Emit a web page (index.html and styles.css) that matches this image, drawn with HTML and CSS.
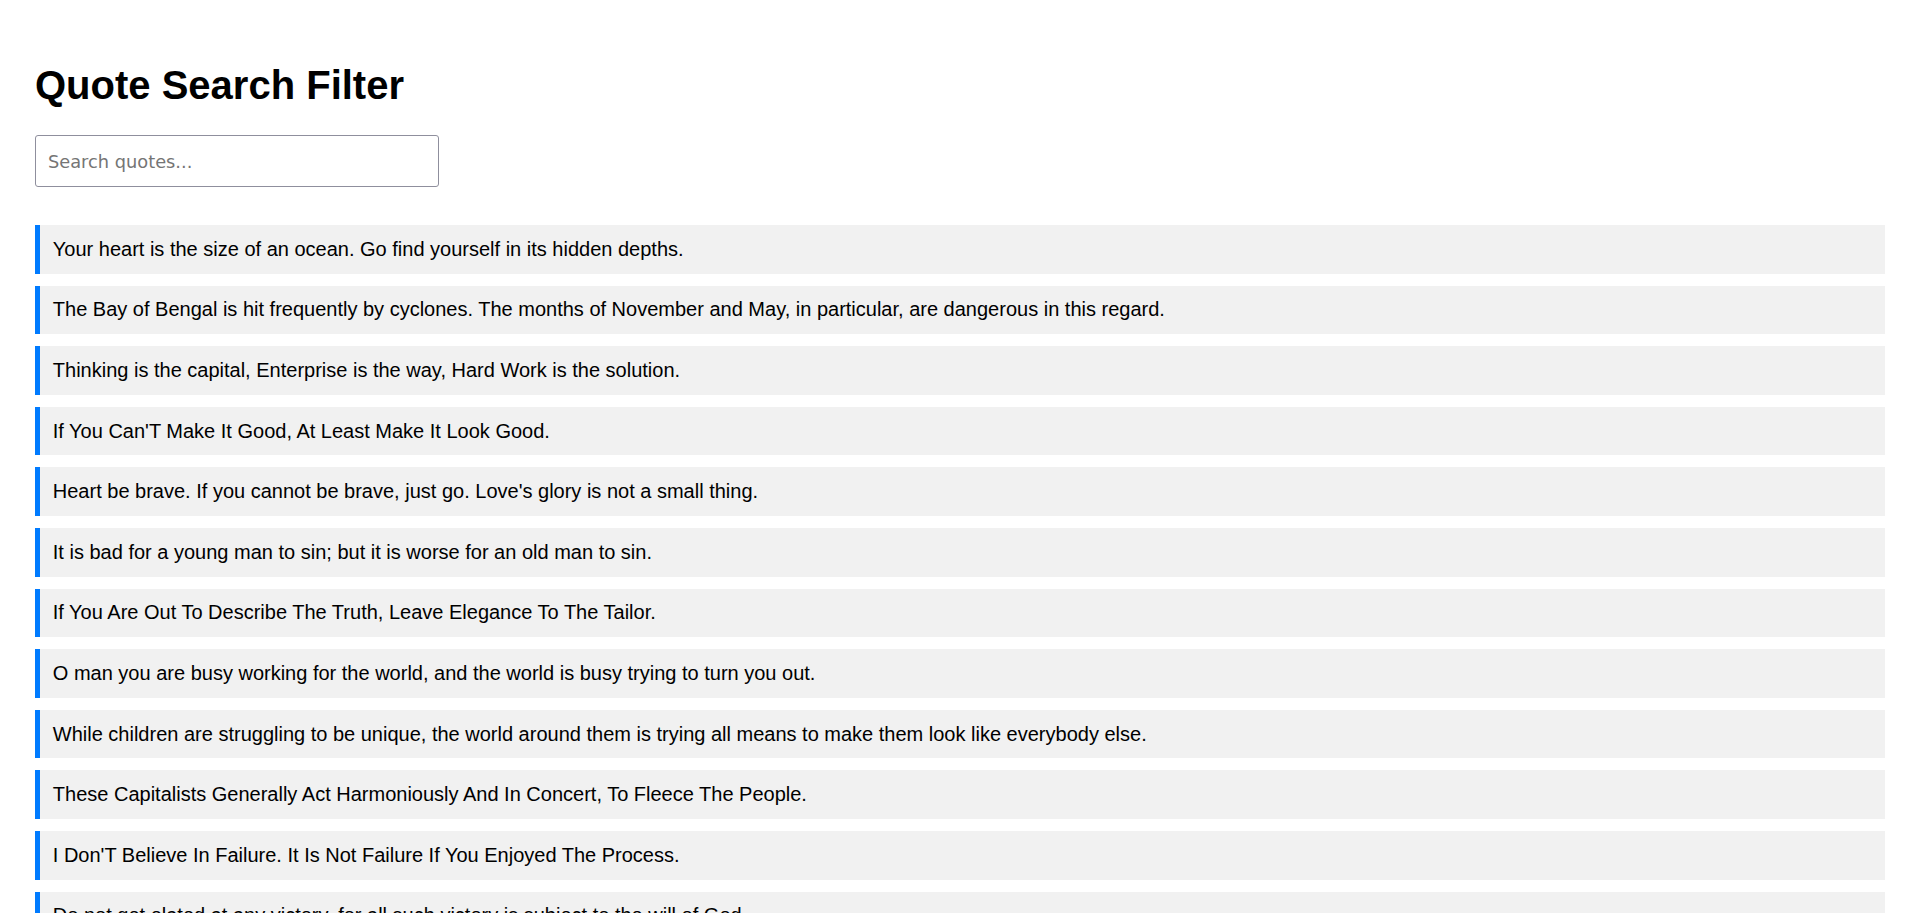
FILE: index.html
```html
<!DOCTYPE html>
<html lang="en">
<head>
<meta charset="utf-8">
<title>Quote Search Filter</title>
<link rel="stylesheet" href="styles.css">
</head>
<body>
<main class="page">
  <h1 class="title">Quote Search Filter</h1>
  <input class="search" type="text" placeholder="Search quotes...">
  <ul class="quotes">
    <li class="quote">Your heart is the size of an ocean. Go find yourself in its hidden depths.</li>
    <li class="quote">The Bay of Bengal is hit frequently by cyclones. The months of November and May, in particular, are dangerous in this regard.</li>
    <li class="quote">Thinking is the capital, Enterprise is the way, Hard Work is the solution.</li>
    <li class="quote">If You Can'T Make It Good, At Least Make It Look Good.</li>
    <li class="quote">Heart be brave. If you cannot be brave, just go. Love's glory is not a small thing.</li>
    <li class="quote">It is bad for a young man to sin; but it is worse for an old man to sin.</li>
    <li class="quote">If You Are Out To Describe The Truth, Leave Elegance To The Tailor.</li>
    <li class="quote">O man you are busy working for the world, and the world is busy trying to turn you out.</li>
    <li class="quote">While children are struggling to be unique, the world around them is trying all means to make them look like everybody else.</li>
    <li class="quote">These Capitalists Generally Act Harmoniously And In Concert, To Fleece The People.</li>
    <li class="quote">I Don'T Believe In Failure. It Is Not Failure If You Enjoyed The Process.</li>
    <li class="quote">Do not get elated at any victory, for all such victory is subject to the will of God.</li>
    <li class="quote">Wear gratitude like a cloak and it will feed every corner of your life.</li>
    <li class="quote">Very little is needed to make a happy life; it is all within yourself, in your way of thinking.</li>
  </ul>
</main>
</body>
</html>
```
FILE: styles.css
```css
html, body {
  margin: 0;
  padding: 0;
  background: #ffffff;
}

body {
  font-family: "Liberation Sans", Arial, sans-serif;
  color: #000000;
}

.page {
  padding: 36px 35px 35px;
}

.title {
  font-size: 40px;
  font-weight: bold;
  margin: 27px 0;
  line-height: normal;
}

.search {
  display: block;
  box-sizing: border-box;
  width: 404px;
  height: 52px;
  padding: 0 12px;
  font-family: "DejaVu Sans", sans-serif;
  font-size: 17.8px;
  color: #000;
  border: 1px solid #8f8f9d;
  border-radius: 3px;
  background: #fff;
  margin: 0 0 38px 0;
  outline: none;
}

.search::placeholder {
  color: #757575;
}

.quotes {
  list-style: none;
  margin: 0;
  padding: 0;
  display: flex;
  flex-direction: column;
  gap: 12px;
}

.quote {
  background: #f1f1f1;
  border-left: 5px solid #007bff;
  padding: 12.8px;
  font-size: 20px;
  line-height: normal;
}
```
